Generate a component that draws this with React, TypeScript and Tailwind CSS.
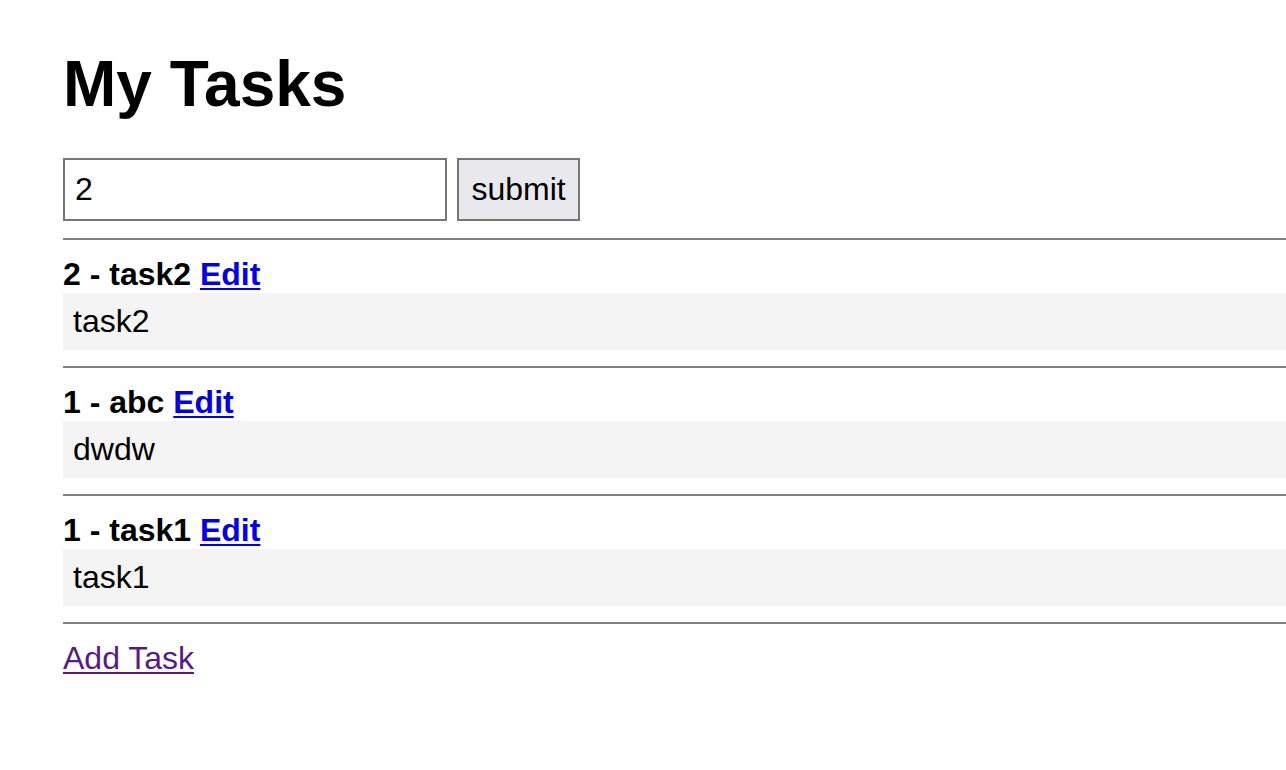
import React from "react";

const tasks = [
  { id: 2, title: "task2", body: "task2" },
  { id: 1, title: "abc", body: "dwdw" },
  { id: 1, title: "task1", body: "task1" },
];

export default function App() {
  return (
    <div
      className="min-h-[770px] bg-white pl-[63px] pt-[47px] text-[32px] text-black"
      style={{ fontFamily: '"Liberation Sans", Arial, Helvetica, sans-serif' }}
    >
      <h1 className="m-0 text-[64px] font-bold leading-[74px]">My Tasks</h1>
      <form className="mt-[37px] flex items-start gap-[10px]" onSubmit={(e) => e.preventDefault()}>
        <input
          defaultValue="2"
          className="box-border h-[63px] w-[384px] border-2 border-[#767676] bg-white px-[10px] text-[32px] leading-[37px] outline-none"
        />
        <button
          type="submit"
          className="box-border h-[63px] w-[123px] border-2 border-[#767676] bg-[#e9e9ed] text-[32px] leading-[37px]"
        >
          submit
        </button>
      </form>
      <div className="mt-[17px] h-[2px] w-full bg-[#808080]" />
      {tasks.map((t, i) => (
        <div key={i}>
          <div className="mt-[16px] font-bold leading-[37px]">
            {t.id} - {t.title}{" "}
            <a href="#" className="text-[#0000ee] underline decoration-2 underline-offset-[3px]">
              Edit
            </a>
          </div>
          <div className="bg-[#f4f4f4] px-[10px] py-[10px] leading-[37px]">{t.body}</div>
          <div className="mt-[16px] h-[2px] w-full bg-[#808080]" />
        </div>
      ))}
      <div className="mt-[16px] leading-[37px]">
        <a href="#" className="text-[#551a8b] underline decoration-2 underline-offset-[3px]">
          Add Task
        </a>
      </div>
    </div>
  );
}
